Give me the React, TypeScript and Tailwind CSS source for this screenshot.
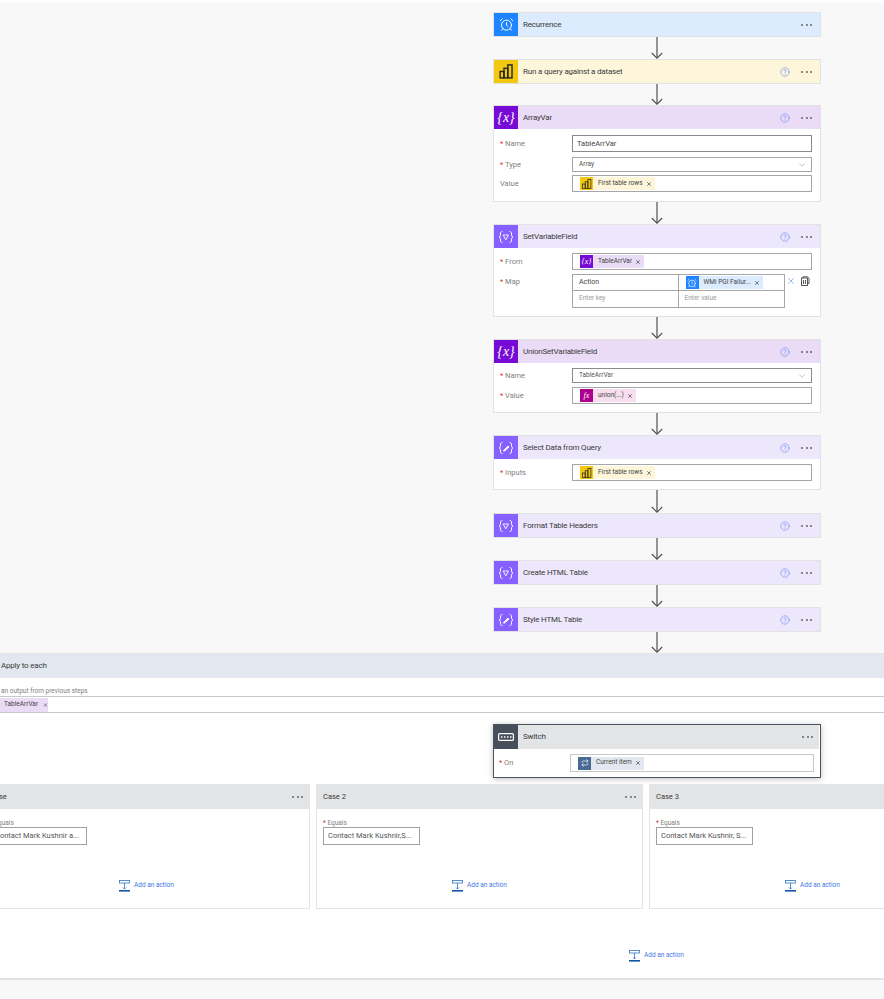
import React from 'react';
import { AlarmClock, ChevronDown, CircleHelp, Repeat, X } from 'lucide-react';

type Kind = 'clock' | 'bi' | 'var' | 'filter' | 'pen' | 'switch' | 'loop';

const BiIcon: React.FC<{ size?: number }> = ({ size = 16 }) => (
    <svg width={size} height={size} viewBox="0 0 16 16" fill="none" stroke="#252423" strokeWidth={size < 14 ? 1 : 1.3}>
        <rect x="2" y="8" width="3.6" height="6" />
        <rect x="5.6" y="5" width="3.6" height="9" />
        <rect x="9.2" y="1.8" width="4" height="12.2" />
    </svg>
);

const Braces: React.FC<{ size?: number; children?: React.ReactNode }> = ({ size = 16, children }) => (
    <svg width={size} height={size} viewBox="0 0 16 16" fill="none" stroke="#fff" strokeWidth="0.9" strokeLinecap="round">
        <path d="M4 2.5c-1.5 0-1.500 1-1.500 2.500S2.500 7.500 1 8c1.500.5 1.500 1.500 1.500 3s0 2.500 1.500 2.500" />
        <path d="M12 2.500c1.500 0 1.500 1 1.500 2.500s0 2.500 1.500 3c-1.500.5-1.500 1.500-1.500 3s0 2.500-1.500 2.500" />
        {children}
    </svg>
);

const HeaderIcon: React.FC<{ kind: Kind; small?: boolean }> = ({ kind, small }) => {
    const size = small ? 11 : 16;
    if (kind === 'clock') return <AlarmClock size={small ? 10 : 15} color="#fff" strokeWidth={1.6} />;
    if (kind === 'loop') return <Repeat size={8} color="#fff" strokeWidth={2} />;
    if (kind === 'bi') return <BiIcon size={small ? 12 : 17} />;
    if (kind === 'var')
        return (
            <span className={`font-['Liberation_Serif',serif] italic text-white leading-none ${small ? 'text-[8px]' : 'text-[14px]'}`}>
                {'{x}'}
            </span>
        );
    if (kind === 'filter')
        return (
            <Braces size={size}>
                <path d="M5.500 6h5L8 10.500z" />
            </Braces>
        );
    if (kind === 'pen')
        return (
            <Braces size={size}>
                <path d="M5.500 10.500l4.500-4.500 1 1-4.500 4z" fill="#fff" />
            </Braces>
        );
    return (
        <svg width="16" height="8" viewBox="0 0 16 8" fill="none">
            <rect x="0.600" y="0.600" width="14.800" height="6.800" rx="1" stroke="#fff" strokeWidth="1.200" />
            <path d="M3 4h1.500M6 4h1.500M9 4h1.500M12 4h1.500" stroke="#fff" strokeWidth="1.600" />
        </svg>
    );
};

const Dots: React.FC = () => (
    <div className="flex gap-[2.500px] items-center">
        <span className="w-[2px] h-[2px] rounded-full bg-[#666]" />
        <span className="w-[2px] h-[2px] rounded-full bg-[#666]" />
        <span className="w-[2px] h-[2px] rounded-full bg-[#666]" />
    </div>
);

const Arrow: React.FC<{ height?: number }> = ({ height = 22 }) => (
    <div className="flex justify-center">
        <svg width="12" height={height} viewBox={`0 0 12 ${height}`} fill="none" stroke="#505050" className="block">
            <path d={`M6 0v${height - 1}`} strokeWidth="1.200" />
            <path d={`M0.800 ${height - 6}L6 ${height - 0.800}L11.200 ${height - 6}`} strokeWidth="1.100" />
        </svg>
    </div>
);

const Header: React.FC<{ title: string; kind: Kind; tint: string; solid: string; help?: boolean }> = ({ title, kind, tint, solid, help = true }) => (
    <div className={`flex items-center h-[23px] shrink-0 ${tint}`}>
        <div className={`w-[24px] h-full flex items-center justify-center shrink-0 ${solid}`}>
            <HeaderIcon kind={kind} />
        </div>
        <span className="ml-[5px] text-[8px] tracking-[-0.2px] font-normal text-[#3b3b3b] flex-1">{title}</span>
        {help && <CircleHelp size={10} color="#6f8ef5" strokeWidth={1.600} className="mr-[11px]" />}
        <div className="mr-[7px] w-[12px]">
            <Dots />
        </div>
    </div>
);

const Card: React.FC<{ className?: string; children: React.ReactNode }> = ({ className = '', children }) => (
    <div className={`bg-white border border-[#e2e2e2] flex flex-col ${className}`}>{children}</div>
);

const Label: React.FC<{ text: string; required?: boolean }> = ({ text, required = true }) => (
    <span className="block w-[78px] pl-[6px] shrink-0 text-[7.500px] text-[#808080] leading-none">
        {required && <span className="text-[#d13438]">*</span>}
        {required && ' '}
        {text}
    </span>
);

const Token: React.FC<{ text: string; kind: 'bi' | 'var' | 'fx' | 'clock' | 'loop'; tint: string; solid: string }> = ({ text, kind, tint, solid }) => (
    <div className={`flex items-center h-[13px] pr-[2px] ${tint}`}>
        <div className={`w-[13px] h-[13px] flex items-center justify-center ${solid}`}>
            {kind === 'fx' ? (
                <span className="font-['Liberation_Serif',serif] italic text-white text-[8px] leading-none">fx</span>
            ) : (
                <HeaderIcon kind={kind} small />
            )}
        </div>
        <span className="ml-[5px] text-[6.500px] text-[#444] whitespace-nowrap">{text}</span>
        <X size={6} color="#333" strokeWidth={2.500} className="ml-[3px] mr-[1px]" />
    </div>
);

const Input: React.FC<{ children: React.ReactNode; h?: string; select?: boolean; border?: string; pad?: string }> = ({ children, h = 'h-[17px]', select, border = 'border-[#a6a6a6]', pad = 'pl-[7px]' }) => (
    <div className={`w-[240px] shrink-0 ${h} bg-white border ${border} flex items-center ${pad} pr-[4px]`}>
        <div className="flex-1 flex items-center">{children}</div>
        {select && <ChevronDown size={10} color="#888" strokeWidth={1.200} />}
    </div>
);

const biToken = <Token text="First table rows" kind="bi" tint="bg-[#fdf6db]" solid="bg-[#f2c811]" />;

const AddAction: React.FC = () => (
    <div className="flex items-center gap-[4px]">
        <svg width="11" height="12" viewBox="0 0 11 12" fill="none">
            <rect x="0.500" y="0.500" width="10" height="2.500" stroke="#2f74c0" strokeWidth="0.800" />
            <path d="M5.500 3v6M4 7.500l1.500 1.500L7 7.500" stroke="#2f74c0" strokeWidth="0.800" />
            <rect x="0" y="10" width="11" height="1.600" fill="#0f55a8" />
        </svg>
        <span className="text-[6.500px] text-[#3f76e8] whitespace-nowrap">Add an action</span>
    </div>
);

const CaseCard: React.FC<{ title: string; value: string }> = ({ title, value }) => (
    <div className="w-[327px] shrink-0 h-[125px] bg-white border border-[#e4e4e4] flex flex-col">
        <div className="h-[24px] shrink-0 bg-[#e3e4e5] flex items-center justify-between pl-[6px] pr-[6px]">
            <span className="text-[7.500px] text-[#3b3b3b]">{title}</span>
            <Dots />
        </div>
        <div className="pl-[6px] pt-[10px]">
            <div className="text-[6.500px] text-[#808080] leading-[8px]">
                <span className="text-[#d13438]">*</span> Equals
            </div>
            <div className="w-[97px] h-[18px] border border-[#a0a0a0] flex items-center pl-[4px] text-[7.500px] text-[#555] whitespace-nowrap">
                {value}
            </div>
        </div>
        <div className="mt-[35px] ml-[135px]">
            <AddAction />
        </div>
    </div>
);

export default function App() {
    return (
        <div className="w-[884px] h-[999px] overflow-hidden bg-[#f8f8f8] font-['Roboto','Noto_Sans',sans-serif] flex flex-col">
            <div className="h-[3px] shrink-0 bg-[#fdfdfd]" />
            <div className="ml-[493px] w-[328px] flex flex-col pt-[9px]">
                <Card>
                    <Header title="Recurrence" kind="clock" tint="bg-[#dcebfd]" solid="bg-[#1f85ff]" help={false} />
                </Card>
                <Arrow />
                <Card>
                    <Header title="Run a query against a dataset" kind="bi" tint="bg-[#fdf6db]" solid="bg-[#f2c811]" />
                </Card>
                <Arrow height={21} />

                <Card className="h-[97px]">
                    <Header title="ArrayVar" kind="var" tint="bg-[#eadcf6]" solid="bg-[#770bd6]" />
                    <div className="flex flex-col pt-[6px]">
                        <div className="flex items-center">
                            <Label text="Name" />
                            <Input border="border-[#8a8a8a]" pad="pl-[4px]"><span className="text-[7.500px] text-[#444]">TableArrVar</span></Input>
                        </div>
                        <div className="flex items-center mt-[5px]">
                            <Label text="Type" />
                            <Input h="h-[15px]" select pad="pl-[6px]"><span className="text-[6.500px] text-[#555]">Array</span></Input>
                        </div>
                        <div className="flex items-center mt-[3px]">
                            <Label text="Value" required={false} />
                            <Input>{biToken}</Input>
                        </div>
                    </div>
                </Card>
                <Arrow />

                <Card className="h-[93px]">
                    <Header title="SetVariableField" kind="filter" tint="bg-[#ede7fc]" solid="bg-[#8661ff]" />
                    <div className="flex flex-col pt-[5px] gap-[4px]">
                        <div className="flex items-center">
                            <Label text="From" />
                            <Input>
                                <Token text="TableArrVar" kind="var" tint="bg-[#eadcf6]" solid="bg-[#770bd6]" />
                            </Input>
                        </div>
                        <div className="flex items-start">
                            <div className="pt-[4px] shrink-0">
                                <Label text="Map" />
                            </div>
                            <div className="w-[213px] shrink-0 h-[34px] border border-[#a6a6a6] grid grid-cols-2 grid-rows-2 text-[7px]">
                                <div className="border-r border-b border-[#a6a6a6] flex items-center pl-[6px] text-[#444]">Action</div>
                                <div className="border-b border-[#a6a6a6] flex items-center pl-[7px]">
                                    <Token text="WMi PGI Failur..." kind="clock" tint="bg-[#dcebfd]" solid="bg-[#1f85ff]" />
                                </div>
                                <div className="border-r border-[#a6a6a6] flex items-center pl-[6px] text-[#9a9a9a] text-[6.500px]">Enter key</div>
                                <div className="flex items-center pl-[6px] text-[#9a9a9a] text-[6.500px]">Enter value</div>
                            </div>
                            <div className="flex items-center gap-[4px] pl-[1px] pt-[2px] shrink-0">
                                <X size={10} color="#3f76e8" strokeWidth={1.200} />
                                <svg width="10" height="10" viewBox="0 0 10 10" fill="none" stroke="#444" strokeWidth="0.900">
                                    <rect x="1.500" y="2" width="6" height="7.500" />
                                    <path d="M3 2V0.800h4.500L9 2.300v5.200H7.500M3.500 4v4M5.500 4v4" />
                                </svg>
                            </div>
                        </div>
                    </div>
                </Card>
                <Arrow />

                <Card className="h-[74px]">
                    <Header title="UnionSetVariableField" kind="var" tint="bg-[#eadcf6]" solid="bg-[#770bd6]" />
                    <div className="flex flex-col pt-[5px] gap-[4px]">
                        <div className="flex items-center">
                            <Label text="Name" />
                            <Input h="h-[15px]" select border="border-[#8a8a8a]" pad="pl-[6px]"><span className="text-[6.500px] text-[#555]">TableArrVar</span></Input>
                        </div>
                        <div className="flex items-center">
                            <Label text="Value" />
                            <Input>
                                <Token text="union(...)" kind="fx" tint="bg-[#f7dff0]" solid="bg-[#ad008c]" />
                            </Input>
                        </div>
                    </div>
                </Card>
                <Arrow />

                <Card className="h-[55px]">
                    <Header title="Select Data from Query" kind="pen" tint="bg-[#ede7fc]" solid="bg-[#8661ff]" />
                    <div className="flex items-center pt-[5px]">
                        <Label text="Inputs" />
                        <Input>{biToken}</Input>
                    </div>
                </Card>
                <Arrow height={23} />
                <Card>
                    <Header title="Format Table Headers" kind="filter" tint="bg-[#ede7fc]" solid="bg-[#8661ff]" />
                </Card>
                <Arrow />
                <Card>
                    <Header title="Create HTML Table" kind="filter" tint="bg-[#ede7fc]" solid="bg-[#8661ff]" />
                </Card>
                <Arrow />
                <Card>
                    <Header title="Style HTML Table" kind="pen" tint="bg-[#ede7fc]" solid="bg-[#8661ff]" />
                </Card>
                <Arrow height={21} />
            </div>

            <div className="h-[327px] shrink-0 bg-white border-t border-b-2 border-t-[#e4e4e4] border-b-[#e2e2e2] flex flex-col">
                <div className="h-[24px] shrink-0 bg-[#e3e8f0] flex items-center pl-[1px] text-[8px] tracking-[-0.2px] text-[#3b3b3b]">Apply to each</div>
                <div className="pl-[1px] mt-[9px] text-[6.500px] leading-[9px] text-[#808080]">an output from previous steps</div>
                <div className="h-[17px] border-y border-[#c8c8c8] flex items-center">
                    <div className="h-[14px] w-[48px] bg-[#eadcf6] flex items-center pl-[4px] text-[6.500px] text-[#444] whitespace-nowrap">
                        TableArrVar
                        <X size={6} color="#333" strokeWidth={2.500} className="ml-[5px]" />
                    </div>
                </div>

                <div className="ml-[493px] mt-[11px] w-[328px] h-[54px] bg-white border border-[#4a5360] shadow-[0_1px_6px_rgba(0,0,0,0.25)] flex flex-col">
                    <div className="flex items-center h-[24px] shrink-0 bg-[#e3e4e5] mr-[1px]">
                        <div className="w-[24px] h-full bg-[#474f5b] flex items-center justify-center">
                            <HeaderIcon kind="switch" />
                        </div>
                        <span className="ml-[5px] flex-1 text-[8px] tracking-[-0.2px] text-[#3b3b3b]">Switch</span>
                        <div className="mr-[5px] w-[12px]">
                            <Dots />
                        </div>
                    </div>
                    <div className="flex items-center pt-[5px]">
                        <span className="w-[76px] pl-[5px] shrink-0 text-[7.500px] text-[#808080] leading-none">
                            <span className="text-[#d13438]">*</span> On
                        </span>
                        <div className="w-[244px] h-[18px] border border-[#c8c8c8] flex items-center pl-[7px]">
                            <Token text="Current item" kind="loop" tint="bg-[#e3e8f0]" solid="bg-[#486991]" />
                        </div>
                    </div>
                </div>

                <div className="flex gap-[6px] ml-[-17px] mt-[6px]">
                    <CaseCard title="Case" value="Contact Mark Kushnir a..." />
                    <CaseCard title="Case 2" value="Contact Mark Kushnir,S..." />
                    <CaseCard title="Case 3" value="Contact Mark Kushnir, S..." />
                </div>

                <div className="ml-[629px] mt-[41px]">
                    <AddAction />
                </div>
            </div>
        </div>
    );
}
